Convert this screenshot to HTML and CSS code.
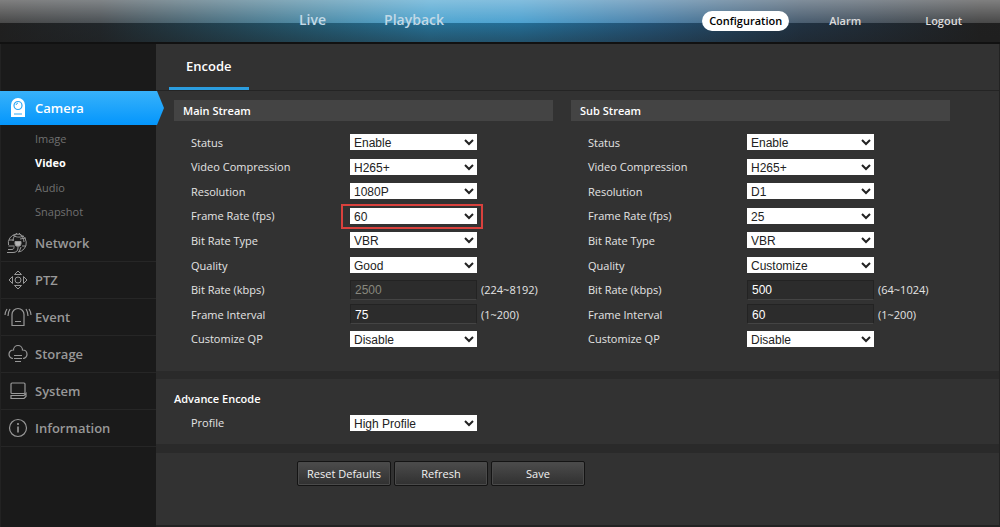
FILE: index.html
```html
<!DOCTYPE html>
<html lang="en">
<head>
    <meta charset="UTF-8">
    <meta name="viewport" content="width=device-width, initial-scale=1.0">
    <title>Encode</title>
    <link rel="stylesheet" href="styles.css">
</head>
<body>
    <header class="topbar">
        <nav class="topnav main-nav">
            <a href="#live">Live</a>
            <a href="#playback">Playback</a>
        </nav>
        <nav class="topnav user-nav">
            <a href="#config" class="selected">Configuration</a>
            <a href="#alarm">Alarm</a>
            <a href="#logout">Logout</a>
        </nav>
    </header>
    <div class="page">
        <aside class="sidebar">
            <a href="#camera" class="menu-item active">
                <svg class="icon" viewBox="0 0 28 24">
                    <path d="M7 21V9a7 7 0 0 1 14 0v12z" fill="#fff"/>
                    <circle cx="14" cy="9.500" r="4" fill="#fff" stroke="#2ba8f5" stroke-width="1.2"/>
                    <path d="M12 9a2.500 2.500 0 0 1 2-2M10 18h8" stroke="#2ba8f5" fill="none"/>
                </svg>
                Camera
            </a>
            <div class="submenu">
                <a href="#image">Image</a>
                <a href="#video" class="current">Video</a>
                <a href="#audio">Audio</a>
                <a href="#snapshot">Snapshot</a>
            </div>
            <a href="#network" class="menu-item">
                <svg class="icon" viewBox="0 0 28 24">
                    <path d="M4.500 14A9 9 0 1 1 14 21M5 9h5M9 4c2 2 6 3 11 1M13 2c-3 3-4 5-4 8M15 2c3 3 5 6 5 9M16 8l6-1M4.500 15h6M18 15h4M17 16l-2 5"/>
                    <path d="M11 10.500h6v2.500l-1 2h-4l-1-2z" fill="#b4b4b4"/>
                    <path d="M14 15v2c0 3-2 4.500-5 4.500H3M4 18.500h4c2 0 2-2 2-3"/>
                </svg>
                Network
            </a>
            <a href="#ptz" class="menu-item">
                <svg class="icon" viewBox="0 0 28 24">
                    <circle cx="14" cy="12" r="3"/>
                    <path d="M10.500 6.500L14 3l3.500 3.500zM10.500 17.500L14 21l3.500-3.500zM8.500 8.500L5 12l3.500 3.500zM19.500 8.500L23 12l-3.500 3.500z"/>
                </svg>
                PTZ
            </a>
            <a href="#event" class="menu-item">
                <svg class="icon" viewBox="0 0 28 24">
                    <path d="M8 20.500V9.500a6 6 0 0 1 12 0v11zM11 16.500h6M6 4q-2 3-2 7M3 4q-2 3-2 6M22 4q2 3 2 7M25 4q2 3 2 6" stroke-width="1.200"/>
                </svg>
                Event
            </a>
            <a href="#storage" class="menu-item">
                <svg class="icon" viewBox="0 0 28 24">
                    <path d="M9 16.500a4 4 0 0 1 .5-8.500 4.500 4.500 0 0 1 9 0 4 4 0 0 1 .5 8.500M10 13.500h8M10 16.500h8M11 19.500h6" stroke-width="1.200"/>
                </svg>
                Storage
            </a>
            <a href="#system" class="menu-item">
                <svg class="icon" viewBox="0 0 28 24">
                    <rect x="7" y="4" width="14" height="10.500" rx="1" stroke-width="1.200"/>
                    <path d="M7 16.500h13l2-2v3l-2 2H7z" stroke-width="1.200"/>
                </svg>
                System
            </a>
            <a href="#information" class="menu-item">
                <svg class="icon" viewBox="0 0 28 24">
                    <circle cx="14" cy="12" r="8.500" stroke-width="1.200"/>
                    <path d="M14 10.500v6M14 7v2" stroke-width="1.600"/>
                </svg>
                Information
            </a>
        </aside>
        <main class="content">
            <div class="tabs">
                <a href="#encode" class="tab">Encode</a>
            </div>
            <form>
                <div class="streams">
                    <section>
                        <h2 class="stream-title">Main Stream</h2>
                        <div class="rows">
                            <div class="row"><label for="m-status">Status</label><select id="m-status"><option>Enable</option></select></div>
                            <div class="row"><label for="m-comp">Video Compression</label><select id="m-comp"><option>H265+</option></select></div>
                            <div class="row"><label for="m-res">Resolution</label><select id="m-res"><option>1080P</option></select></div>
                            <div class="row"><label for="m-fps">Frame Rate (fps)</label><div class="marked"><select id="m-fps"><option>60</option></select></div></div>
                            <div class="row"><label for="m-type">Bit Rate Type</label><select id="m-type"><option>VBR</option></select></div>
                            <div class="row"><label for="m-quality">Quality</label><select id="m-quality"><option>Good</option></select></div>
                            <div class="row"><label for="m-rate">Bit Rate (kbps)</label><input type="text" id="m-rate" value="2500" disabled><span>(224~8192)</span></div>
                            <div class="row"><label for="m-interval">Frame Interval</label><input type="text" id="m-interval" value="75"><span>(1~200)</span></div>
                            <div class="row"><label for="m-qp">Customize QP</label><select id="m-qp"><option>Disable</option></select></div>
                        </div>
                    </section>
                    <section>
                        <h2 class="stream-title">Sub Stream</h2>
                        <div class="rows">
                            <div class="row"><label for="s-status">Status</label><select id="s-status"><option>Enable</option></select></div>
                            <div class="row"><label for="s-comp">Video Compression</label><select id="s-comp"><option>H265+</option></select></div>
                            <div class="row"><label for="s-res">Resolution</label><select id="s-res"><option>D1</option></select></div>
                            <div class="row"><label for="s-fps">Frame Rate (fps)</label><select id="s-fps"><option>25</option></select></div>
                            <div class="row"><label for="s-type">Bit Rate Type</label><select id="s-type"><option>VBR</option></select></div>
                            <div class="row"><label for="s-quality">Quality</label><select id="s-quality"><option>Customize</option></select></div>
                            <div class="row"><label for="s-rate">Bit Rate (kbps)</label><input type="text" id="s-rate" value="500"><span>(64~1024)</span></div>
                            <div class="row"><label for="s-interval">Frame Interval</label><input type="text" id="s-interval" value="60"><span>(1~200)</span></div>
                            <div class="row"><label for="s-qp">Customize QP</label><select id="s-qp"><option>Disable</option></select></div>
                        </div>
                    </section>
                </div>
                <section class="advance">
                    <h2>Advance Encode</h2>
                    <div class="row"><label for="profile">Profile</label><select id="profile"><option>High Profile</option></select></div>
                </section>
                <div class="buttons">
                    <button type="reset">Reset Defaults</button>
                    <button type="button">Refresh</button>
                    <button type="submit">Save</button>
                </div>
            </form>
        </main>
    </div>
</body>
</html>
```
FILE: styles.css
```css
* {
    box-sizing: border-box;
}
body {
    margin: 0;
    min-height: 100vh;
    display: flex;
    flex-direction: column;
    background-color: #1a1a1a;
    color: #e4e4e4;
    font-family: "Open Sans", "Noto Sans", sans-serif;
    font-size: 11px;
}
a {
    color: inherit;
    text-decoration: none;
}
h2 {
    margin: 0;
    font-size: 11px;
    font-weight: 600;
    color: #fff;
}
.topbar {
    display: flex;
    justify-content: space-between;
    align-items: center;
    height: 44px;
    padding-right: 38px;
    border-bottom: 2px solid #111;
    background:
        linear-gradient(to bottom, rgba(255, 255, 255, 0.4) 0, rgba(255, 255, 255, 0.14) 23px, rgba(0, 0, 0, 0.25) 23px, rgba(20, 20, 20, 0.5) 42px),
        linear-gradient(to right, #2a2a2a 0%, #2c3338 10%, #2f7391 30%, #3397c9 43%, #3092c8 52%, #2f6d9b 65%, #2b4258 80%, #2a2a2a 98%);
}
.topnav {
    display: flex;
    align-items: center;
    font-weight: 600;
}
.main-nav {
    gap: 58px;
    padding-left: 299px;
    font-size: 14px;
    line-height: 20px;
    padding-bottom: 2px;
    color: #c2d9e6;
}
.user-nav {
    padding-bottom: 1px;
    font-size: 11px;
    color: #dcdcdc;
    gap: 64px;
}
.user-nav .selected {
    margin-right: -24px;
    padding: 0 7px;
    line-height: 20px;
    border-radius: 10px;
    background-color: #fff;
    color: #000;
}
.page {
    flex: 1;
    display: flex;
}
.sidebar {
    width: 156px;
    padding-top: 47px;
    border-left: 1px solid #222;
    color: #989898;
}
.menu-item {
    display: flex;
    align-items: center;
    gap: 3px;
    height: 37px;
    padding-left: 3px;
    border-bottom: 1px solid #262626;
    font-size: 13px;
    font-weight: 600;
}
.icon {
    width: 28px;
    height: 24px;
    fill: none;
    stroke: #989898;
}
.menu-item.active {
    position: relative;
    z-index: 1;
    width: 164px;
    height: 34px;
    margin-left: -1px;
    padding-left: 4px;
    border: 0;
    clip-path: polygon(0 0, 157px 0, 100% 50%, 157px 100%, 0 100%);
    background: linear-gradient(#38b2fa, #0496fc);
    color: #fff;
}
.menu-item.active .icon {
    stroke: none;
}
.submenu {
    display: grid;
    grid-auto-rows: 1fr;
    align-items: center;
    height: 98px;
    margin: 1px 0;
    padding-left: 34px;
    color: #707070;
}
.submenu .current {
    color: #fff;
    font-weight: bold;
}
.content {
    flex: 1;
    border: 1px solid #222;
    border-width: 0 1px 2px 0;
    background-color: #323232;
}
.tabs {
    height: 47px;
    padding-left: 13px;
    border-bottom: 1px solid #242424;
}
.tab {
    display: inline-block;
    padding: 2px 17px 0;
    line-height: 41px;
    border-bottom: 3px solid #2b9ddf;
    font-size: 13px;
    font-weight: 600;
    color: #fff;
}
.streams {
    display: grid;
    grid-template-columns: 1fr 1fr;
    gap: 18px;
    padding: 9px 49px 20px 18px;
    border-bottom: 8px solid #2a2a2a;
}
.stream-title {
    padding-left: 9px;
    line-height: 21px;
    background-color: #444;
}
.rows {
    display: grid;
    grid-auto-rows: 1fr;
    height: 221px;
    margin-top: 9px;
}
.row {
    display: flex;
    align-items: center;
    padding-left: 17px;
}
.row label {
    width: 159px;
}
.row span {
    margin-left: 4px;
}
select,
input {
    width: 127px;
    font-family: "Liberation Sans", Arial, sans-serif;
    font-size: 12px;
    border: 0;
}
select {
    display: block;
    height: 16px;
    padding: 1px 0 0;
    background-color: #fff;
    color: #222;
}
.marked {
    position: relative;
}
.marked::after {
    content: "";
    position: absolute;
    inset: -4px -6px -5px -9px;
    border: 2px solid #d9413d;
    pointer-events: none;
}
input {
    height: 20px;
    padding: 1px 4px 0;
    border: 1px solid #232323;
    border-bottom-color: #444;
    background-color: #2c2c2c;
    color: #fff;
}
input:disabled {
    color: #88887e;
}
.advance {
    padding: 9px 18px 9px;
    border-bottom: 9px solid #2a2a2a;
}
.advance h2 {
    line-height: 22px;
}
.advance .row {
    height: 25px;
}
.buttons {
    display: flex;
    gap: 3px;
    padding: 8px 0 39px 141px;
}
.buttons button {
    width: 94px;
    height: 25px;
    padding: 0;
    border: 1px solid #141414;
    border-radius: 2px;
    box-shadow: inset 0 0 0 1px #4a4a4a;
    background: linear-gradient(#4c4c4c, #303030);
    color: #f2f2f2;
    font-family: inherit;
    font-size: 11px;
    font-weight: 500;
}
```
